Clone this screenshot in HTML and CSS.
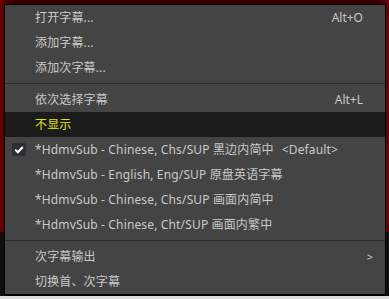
FILE: index.html
```html
<!DOCTYPE html>
<html lang="zh-CN">
<head>
<meta charset="UTF-8">
<title>字幕菜单</title>
<link rel="stylesheet" href="styles.css">
</head>
<body>
    <div class="stage">
        <div class="menu">
            <div class="item"><span class="label">打开字幕...</span><span class="key">Alt+O</span></div>
            <div class="item"><span class="label">添加字幕...</span></div>
            <div class="item"><span class="label">添加次字幕...</span></div>
            <div class="sep"></div>
            <div class="item"><span class="label">依次选择字幕</span><span class="key">Alt+L</span></div>
            <div class="item hot"><span class="label">不显示</span></div>
            <div class="item">
                <span class="check">
                    <svg viewBox="0 0 14 13"><path d="M3.2 6.6l2.6 2.6 5-5.2" fill="none" stroke="#fff" stroke-width="2"/></svg>
                </span>
                <span class="label">*HdmvSub - Chinese, Chs/SUP 黑边内简中<span class="tag">&lt;Default&gt;</span></span>
            </div>
            <div class="item"><span class="label">*HdmvSub - English, Eng/SUP 原盘英语字幕</span></div>
            <div class="item"><span class="label">*HdmvSub - Chinese, Chs/SUP 画面内简中</span></div>
            <div class="item"><span class="label">*HdmvSub - Chinese, Cht/SUP 画面内繁中</span></div>
            <div class="sep"></div>
            <div class="item"><span class="label">次字幕输出</span><span class="arrow">&gt;</span></div>
            <div class="item"><span class="label">切换首、次字幕</span></div>
        </div>
    </div>
    <div class="bottom-strip"></div>
</body>
</html>
```

FILE: styles.css
```css
*{margin:0;padding:0;box-sizing:border-box}
html,body{width:389px;height:299px;overflow:hidden}
body{
    font-family:"Noto Sans","Noto Sans CJK SC",sans-serif;
    font-size:12px;
    color:#c9c9c9;
    background:#d8d8d8;
}

/* video behind the menu */
.stage{
    height:296px;
    padding:4px 3px 0 4px;
    background:
        linear-gradient(to bottom,transparent 232px,#0e0e0e 232px),
        linear-gradient(to right,#640000,#3a0000 3%,#3a0000 97%,#6a0000);
}

.menu{
    background:#444;
    border:1px solid #000;
    border-bottom-width:2px;
    height:292px;
}

.item{
    position:relative;
    display:flex;
    align-items:center;
    height:25px;
    padding:0 22px 0 30px;
    line-height:1;
}
.item .label{flex:1;white-space:nowrap;letter-spacing:.15px}
.item .tag{margin-left:8px}
.item .key{color:#c9c9c9}
.item .arrow{margin-right:-10px;font-size:11px}

.item.hot{background:#1b1b1b;color:#e2e21a}

.check{
    position:absolute;
    left:7px;
    top:6px;
    width:14px;
    height:13px;
    border-radius:2px;
    background:#2d2d33;
}
.check svg{display:block;width:14px;height:13px}

.sep{
    height:7px;
    display:flex;
    align-items:center;
}
.sep::after{
    content:'';
    flex:1;
    height:1px;
    background:#2c2d33;
}

.bottom-strip{height:3px;background:#dcdcdc}
```
